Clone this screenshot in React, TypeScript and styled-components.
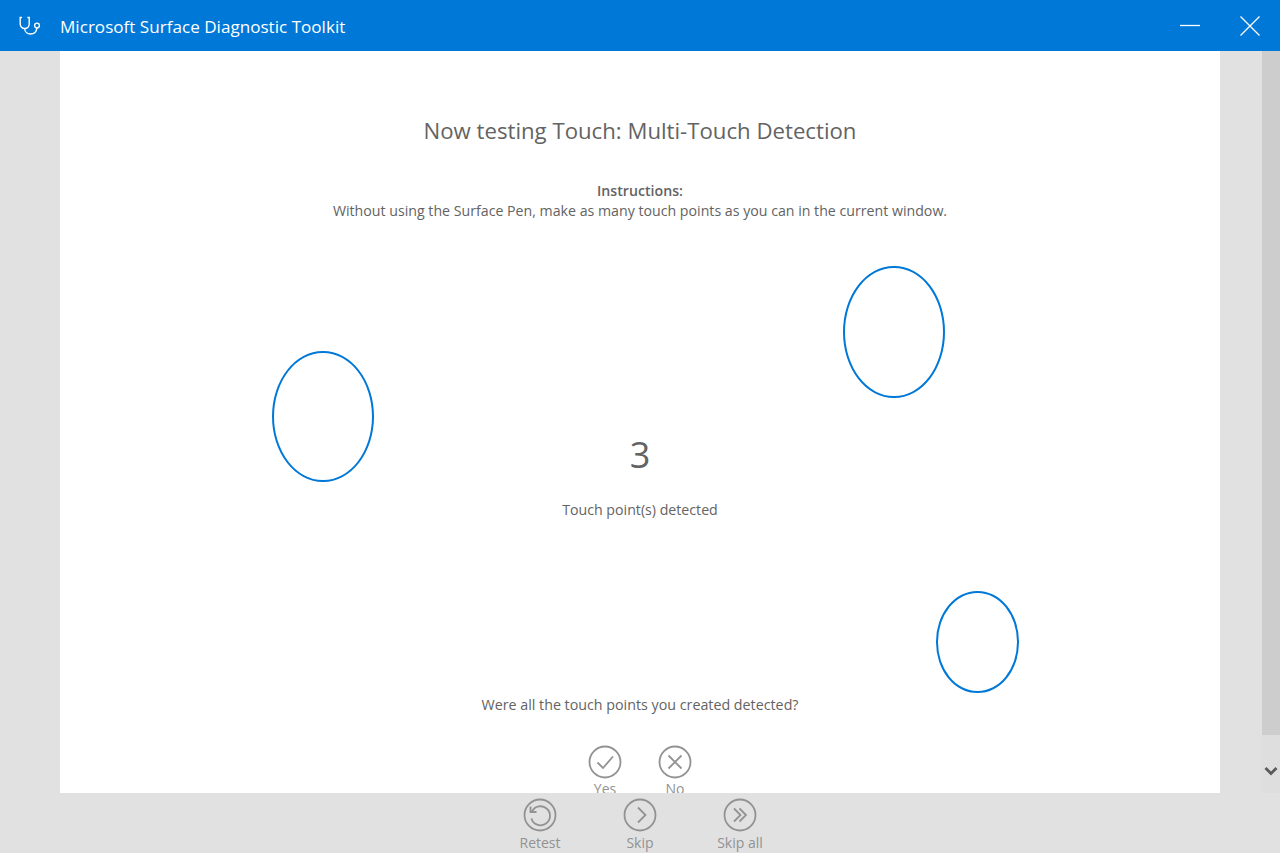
import styled, { createGlobalStyle } from 'styled-components';

const GlobalStyle = createGlobalStyle`
  html, body {
    margin: 0;
    height: 100%;
    overflow: hidden;
  }
  body {
    font-family: "Open Sans", "Noto Sans", sans-serif;
    color: #636363;
  }
`;

const Page = styled.div`
  width: 1280px;
  height: 853px;
  display: flex;
  flex-direction: column;
  background: #e1e1e1;
`;

const TitleBar = styled.header`
  height: 51px;
  flex: none;
  display: flex;
  align-items: center;
  gap: 40px;
  padding-right: 20px;
  box-sizing: border-box;
  background: #0078d7;
  color: #fff;
`;

const AppIcon = styled.svg`
  width: 22px;
  height: 22px;
  margin-left: 19px;
  fill: none;
  stroke: #fff;
  stroke-width: 1.4;
`;

const AppTitle = styled.h1`
  flex: 1;
  margin: 1px 0 0 -21px;
  font-size: 17.1px;
  font-weight: 400;
`;

const WindowButton = styled.button`
  width: 20px;
  height: 20px;
  padding: 0;
  border: 0;
  background: none;
  svg {
    display: block;
    fill: none;
    stroke: #fff;
    stroke-width: 1.3;
  }
`;

const Middle = styled.div`
  flex: 1;
  min-height: 0;
  display: flex;
  padding-left: 60px;
`;

const Panel = styled.main`
  position: relative;
  width: 1160px;
  overflow: hidden;
  display: flex;
  flex-direction: column;
  align-items: center;
  background: #fff;
  text-align: center;
`;

const Heading = styled.h2`
  margin: 62px 0 0;
  font-size: 22.2px;
  line-height: 36px;
  font-weight: 400;
`;

const Instructions = styled.div`
  margin-top: 32px;
  font-size: 14.18px;
  line-height: 20px;
  strong {
    display: block;
    font-weight: 600;
  }
`;

const Count = styled.div`
  margin-top: 207px;
  font-size: 36px;
  line-height: 54px;
`;

const CountLabel = styled.div`
  margin-top: 18px;
  font-size: 14.18px;
  line-height: 20px;
`;

const Question = styled.div`
  margin-top: 175px;
  font-size: 14.28px;
  line-height: 20px;
`;

const ButtonRow = styled.div<{ $gap: number; $top: number }>`
  display: flex;
  justify-content: center;
  gap: ${p => p.$gap}px;
  margin-top: ${p => p.$top}px;
`;

const RoundButton = styled.button`
  width: 60px;
  padding: 0;
  border: 0;
  background: none;
  display: flex;
  flex-direction: column;
  align-items: center;
  font-family: inherit;
  font-size: 14px;
  line-height: 19px;
  color: #929292;
  svg {
    display: block;
    width: 34px;
    height: 34px;
    fill: none;
    stroke: #929292;
    stroke-width: 1.8;
  }
`;

const TouchPoint = styled.div`
  position: absolute;
  border: 2px solid #0078d7;
  border-radius: 50%;
  box-sizing: border-box;
`;

const ScrollTrack = styled.div`
  width: 18px;
  margin-left: 42px;
  flex: none;
  display: flex;
  flex-direction: column;
  background: #dedede;
`;

const ScrollThumb = styled.div`
  height: 684px;
  flex: none;
  background: #cdcdcd;
`;

const ScrollArrow = styled.svg`
  width: 14px;
  height: 10px;
  margin: 31px 0 0 2px;
  fill: none;
  stroke: #5a5a5a;
  stroke-width: 2.8;
`;

const Footer = styled.footer`
  height: 60px;
  flex: none;
  overflow: hidden;
  padding-top: 5px;
  box-sizing: border-box;
  background: #e1e1e1;
  svg {
    margin-bottom: 1px;
  }
`;

const points = [
  { left: 212, top: 299.5, width: 101.5, height: 131 },
  { left: 783, top: 215, width: 101.5, height: 132 },
  { left: 876, top: 540, width: 82.5, height: 101.5 },
];

const Circle = () => <circle cx="17" cy="17" r="15.5" />;

export default function App() {
  return (
    <Page>
      <GlobalStyle />
      <TitleBar>
        <AppIcon viewBox="0 0 22 22">
          <path d="M3 2.5H1.2V9a4.5 4.5 0 0 0 9 0V2.5H8.4" />
          <path d="M5.7 13.5C5.7 17.5 9 19 11.5 19 15 19 17.5 17 17.9 13" />
          <circle cx="18" cy="10.5" r="2.4" />
        </AppIcon>
        <AppTitle>Microsoft Surface Diagnostic Toolkit</AppTitle>
        <WindowButton type="button" title="Minimize">
          <svg width="20" height="20" viewBox="0 0 20 20"><path d="M0 9.5h20" /></svg>
        </WindowButton>
        <WindowButton type="button" title="Close">
          <svg width="20" height="20" viewBox="0 0 20 20"><path d="M.5.5l19 19M19.5.5l-19 19" /></svg>
        </WindowButton>
      </TitleBar>
      <Middle>
        <Panel>
          <Heading>Now testing Touch: Multi-Touch Detection</Heading>
          <Instructions>
            <strong>Instructions:</strong>
            Without using the Surface Pen, make as many touch points as you can in the current window.
          </Instructions>
          <Count>3</Count>
          <CountLabel>Touch point(s) detected</CountLabel>
          <Question>Were all the touch points you created detected?</Question>
          <ButtonRow $gap={10} $top={30}>
            <RoundButton type="button">
              <svg viewBox="0 0 34 34"><Circle /><path d="M9.5 17.5l5.5 5.5L25 11.5" /></svg>
              Yes
            </RoundButton>
            <RoundButton type="button">
              <svg viewBox="0 0 34 34"><Circle /><path d="M10.5 10.5l13 13M23.5 10.5l-13 13" /></svg>
              No
            </RoundButton>
          </ButtonRow>
          {points.map(p => (
            <TouchPoint key={p.left} style={p} />
          ))}
        </Panel>
        <ScrollTrack>
          <ScrollThumb />
          <ScrollArrow viewBox="0 0 14 10"><path d="M1.5 2l5.5 5.5L12.5 2" /></ScrollArrow>
        </ScrollTrack>
      </Middle>
      <Footer>
        <ButtonRow $gap={40} $top={0}>
          <RoundButton type="button">
            <svg viewBox="0 0 34 34">
              <Circle />
              <path d="M9 13.5a9.5 9.5 0 1 1-.6 7" />
              <path d="M7.5 8.5v5.5h6" />
            </svg>
            Retest
          </RoundButton>
          <RoundButton type="button">
            <svg viewBox="0 0 34 34"><Circle /><path d="M15 9.5l7.5 7.5-7.5 7.5" /></svg>
            Skip
          </RoundButton>
          <RoundButton type="button">
            <svg viewBox="0 0 34 34"><Circle /><path d="M11 10.5l6.5 6.5-6.5 6.5M16.5 10.5l6.5 6.5-6.5 6.5" /></svg>
            Skip all
          </RoundButton>
        </ButtonRow>
      </Footer>
    </Page>
  );
}
